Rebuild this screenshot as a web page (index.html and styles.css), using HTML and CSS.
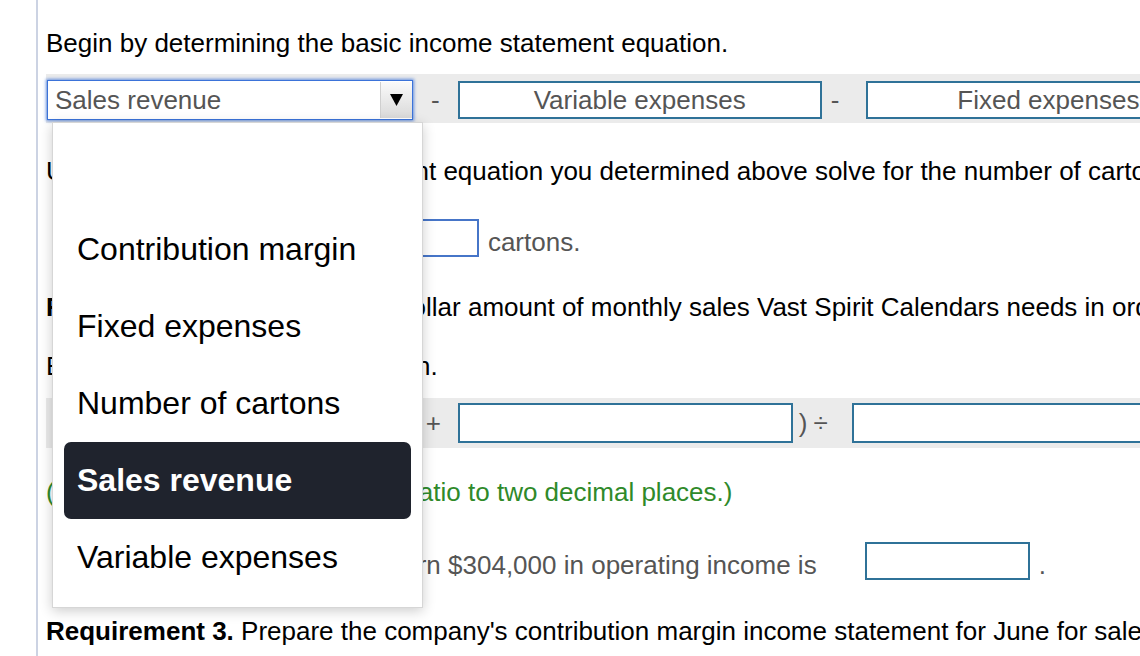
FILE: index.html
```html
<!DOCTYPE html>
<html lang="en">
<head>
    <meta charset="UTF-8">
    <meta name="viewport" content="width=device-width, initial-scale=1.0">
    <title>Breakeven Analysis</title>
    <link rel="stylesheet" href="styles.css">
</head>
<body>

<div class="question">
    <p class="line intro">Begin by determining the basic income statement equation.</p>

    <div class="eq eq-first">
        <div class="select focused">
            <span class="select-value">Sales revenue</span>
            <span class="select-btn">
                <svg width="13" height="12" viewBox="0 0 13 12"><polygon points="0,0 13,0 6.5,12" fill="#000"/></svg>
            </span>
        </div>
        <span class="op op-a">-</span>
        <span class="box">Variable expenses</span>
        <span class="op op-b">-</span>
        <span class="box">Fixed expenses</span>
        <span class="op op-b">=</span>
        <span class="box">Operating income</span>
    </div>

    <p class="line l2">Using the basic income statement equation you determined above solve for the number of cartons Vast Spirit Calendars must sell each month to break even.</p>

    <div class="answer l3">
        <span>Breakeven point is</span>
        <span class="ans ans-blue"></span>
        <span class="after">cartons.</span>
    </div>

    <p class="line l4"><b>Requirement 2.</b> Compute the dollar amount of monthly sales Vast Spirit Calendars needs in order to earn $304,000 in operating income.</p>

    <p class="line l5">Begin by completing the equation.</p>

    <div class="eq eq-second">
        <span class="op op-paren">(</span>
        <div class="select blank"></div>
        <span class="op op-plus">+</span>
        <span class="box box-mid"></span>
        <span class="op op-close">)</span>
        <span class="op op-div">÷</span>
        <span class="box box-mid"></span>
    </div>

    <p class="line note">(Round the contribution margin ratio to two decimal places.)</p>

    <div class="answer l8">
        <span>The sales amount needed to earn $304,000 in operating income is</span>
        <span class="ans"></span>
        <span class="after">.</span>
    </div>

    <p class="line l9"><b>Requirement 3.</b> Prepare the company's contribution margin income statement for June for sales of 250,000 cartons.</p>
</div>

<!-- open dropdown of the first select -->
<ul class="menu">
    <li class="empty"></li>
    <li>Contribution margin</li>
    <li>Fixed expenses</li>
    <li>Number of cartons</li>
    <li class="active">Sales revenue</li>
    <li>Variable expenses</li>
</ul>

</body>
</html>
```

FILE: styles.css
```css
body {
    margin: 0;
    background-color: #fff;
    font-family: "Liberation Sans", Arial, sans-serif;
    font-size: 26px;
    color: #000;
    overflow: hidden;
    height: 656px;
}
.question {
    width: 1500px;
    height: 656px;
    box-sizing: border-box;
    margin-left: 36px;
    border-left: 2px solid #ccd3e3;
    padding: 28px 0 0 8px;
    white-space: nowrap;
}
.line {
    margin: 0;
    line-height: 30px;
}
.l2 { margin-top: 33px; }
.l4 { margin-top: 35px; }
.l5 { margin-top: 29px; }
.note {
    margin-top: 29px;
    color: #2f8a2a;
}
.l9 { margin-top: 36px; }

/* equation rows */
.eq {
    display: flex;
    align-items: center;
    background-color: #ebebeb;
    box-sizing: border-box;
}
.eq-first {
    margin-top: 16px;
    height: 49px;
    padding-top: 3px;
}
.eq-second {
    margin-top: 17px;
    height: 50px;
}
.select {
    display: flex;
    flex-shrink: 0;
    box-sizing: border-box;
    width: 366px;
    height: 40px;
    margin-left: 1px;
    background-color: #fff;
    border: 1px solid #c4c4c4;
}
.select.focused {
    border-color: #3b73d9;
    box-shadow: 0 0 3px 1px rgba(59, 115, 217, 0.75);
}
.select-value {
    flex: 1;
    padding-left: 7px;
    line-height: 38px;
    color: #555;
}
.select-btn {
    width: 32px;
    height: 36px;
    margin: 1px 0 1px 0;
    display: flex;
    align-items: center;
    justify-content: center;
    background: linear-gradient(#fafafa, #d9d9d9);
    border-left: 1px solid #cfcfcf;
    box-sizing: border-box;
}
.select.blank {
    width: 344px;
    margin-left: 6px;
}
.op {
    flex-shrink: 0;
    color: #555;
    line-height: 30px;
}
.op-a { margin: 0 18px; }
.op-b { margin: 0 27px 0 9px; }
.op-paren { margin-left: 8px; }
.op-plus { margin: 0 17px 0 13px; }
.op-close { margin-left: 6px; }
.op-div { margin: 0 24px 0 6px; }
.box {
    flex-shrink: 0;
    box-sizing: border-box;
    width: 364px;
    height: 38px;
    border: 2px solid #2f7298;
    background-color: #fff;
    color: #555;
    text-align: center;
    line-height: 34px;
}
.box-mid {
    width: 335px;
    height: 40px;
}

/* answer lines */
.answer {
    display: flex;
    align-items: flex-end;
    height: 38px;
    padding-left: 6px;
    color: #555;
    line-height: 30px;
}
.l3 { margin-top: 33px; }
.l8 { margin-top: 35px; }
.ans {
    flex-shrink: 0;
    box-sizing: border-box;
    width: 165px;
    height: 38px;
    margin-left: 48px;
    border: 2px solid #2f7298;
    background-color: #fff;
}
.ans-blue {
    border-color: #4675c8;
}
.after {
    margin-left: 9px;
}

/* dropdown list */
.menu {
    position: absolute;
    left: 52px;
    top: 122px;
    width: 371px;
    box-sizing: border-box;
    margin: 0;
    padding: 11px;
    list-style: none;
    background-color: #fff;
    border: 1px solid #d6d6d6;
    box-shadow: 0 3px 12px rgba(0, 0, 0, 0.2);
    font-size: 32px;
}
.menu li {
    height: 77px;
    line-height: 77px;
    padding-left: 13px;
    color: #000;
}
.menu li.active {
    background-color: #1f232d;
    color: #fff;
    font-weight: bold;
    border-radius: 7px;
}
```
